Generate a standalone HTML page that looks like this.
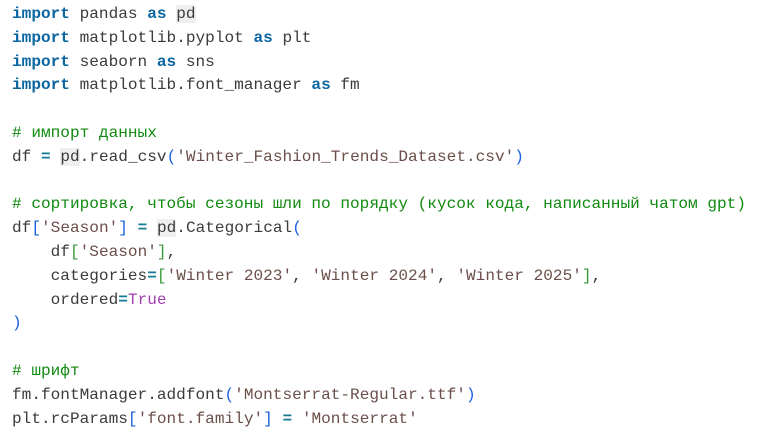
<!DOCTYPE html><html><head><meta charset="utf-8"><style>
body{margin:0;background:#fff;width:766px;height:433px;overflow:hidden}
pre{margin:0;position:absolute;left:12px;top:3px;font-family:"Liberation Mono","DejaVu Sans Mono",monospace;font-size:16.1px;line-height:23.8px;color:#3b3b3b}
.k{color:#0b66a0;font-weight:bold}.c{color:#108a10}.s{color:#6b4f4a}.o{color:#157a95;font-weight:bold}
.b{color:#1a5fe0}.g{color:#3a9a3a}.p{color:#a03fb0}.h{background:#efefef}
</style></head><body><pre><span class="k">import</span> pandas <span class="k">as</span> <span class="h">pd</span>
<span class="k">import</span> matplotlib.pyplot <span class="k">as</span> plt
<span class="k">import</span> seaborn <span class="k">as</span> sns
<span class="k">import</span> matplotlib.font_manager <span class="k">as</span> fm

<span class="c"># импорт данных</span>
df <span class="o">=</span> <span class="h">pd</span>.read_csv<span class="b">(</span><span class="s">'Winter_Fashion_Trends_Dataset.csv'</span><span class="b">)</span>

<span class="c"># сортировка, чтобы сезоны шли по порядку (кусок кода, написанный чатом gpt)</span>
df<span class="b">[</span><span class="s">'Season'</span><span class="b">]</span> <span class="o">=</span> <span class="h">pd</span>.Categorical<span class="b">(</span>
    df<span class="g">[</span><span class="s">'Season'</span><span class="g">]</span>,
    categories<span class="o">=</span><span class="g">[</span><span class="s">'Winter 2023'</span>, <span class="s">'Winter 2024'</span>, <span class="s">'Winter 2025'</span><span class="g">]</span>,
    ordered<span class="o">=</span><span class="p">True</span>
<span class="b">)</span>

<span class="c"># шрифт</span>
fm.fontManager.addfont<span class="b">(</span><span class="s">'Montserrat-Regular.ttf'</span><span class="b">)</span>
plt.rcParams<span class="b">[</span><span class="s">'font.family'</span><span class="b">]</span> <span class="o">=</span> <span class="s">'Montserrat'</span>
</pre></body></html>
